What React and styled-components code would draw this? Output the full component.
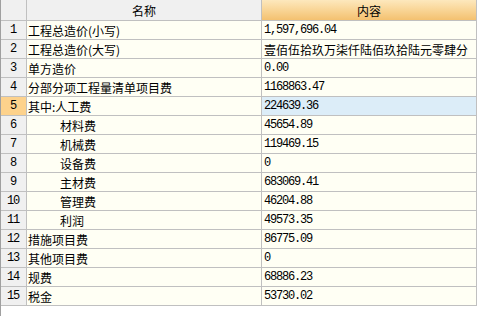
import React from "react";
import styled, { createGlobalStyle, css } from "styled-components";

const Global = createGlobalStyle`
  html, body { margin: 0; padding: 0; background: #ffffff; }
  body { font-family: "Noto Sans CJK SC", "Liberation Sans", sans-serif; }
`;

const Frame = styled.div`
  height: 316px;
  width: 494px;
  border-left: 1px solid #a0a0a0;
  background: #ffffff;
  overflow: hidden;
`;

const Grid = styled.div`
  display: grid;
  grid-template-columns: 26px 235px 215px;
  width: 476px;
`;

const cellBase = css`
  box-sizing: border-box;
  border-right: 1px solid #c0c0c0;
  border-bottom: 1px solid #c0c0c0;
  display: flex;
  align-items: center;
  font-size: 12px;
  color: #000;
  white-space: nowrap;
  overflow: hidden;
`;

const HeadCell = styled.div`
  ${cellBase};
  height: 21px;
  justify-content: center;
  background: ${(p) =>
    p.$accent
      ? "linear-gradient(to bottom, #fde8bd 0%, #f9d596 50%, #f4c170 100%)"
      : "#f0f0f0"};
`;

const NumCell = styled.div`
  ${cellBase};
  height: 19px;
  justify-content: center;
  background: ${(p) => (p.$active ? "#fdd28c" : "#f0f0f0")};
  font-family: "Liberation Mono", monospace;
  letter-spacing: -1.2px;
  padding-right: 1px;
`;

const NameCell = styled.div`
  ${cellBase};
  height: 19px;
  background: #fffff4;
  padding-left: ${(p) => (p.$indent ? 33 : 1)}px;
`;

const ValueCell = styled.div`
  ${cellBase};
  height: 19px;
  background: ${(p) => (p.$active ? "#dcedf8" : "#fffff4")};
  padding-left: 2px;
  font-family: ${(p) =>
    p.$cjk
      ? '"Noto Sans CJK SC", sans-serif'
      : '"Liberation Mono", monospace'};
  letter-spacing: ${(p) => (p.$cjk ? "0" : "-1.2px")};
`;

const rows = [
  ["工程总造价(小写)", "1,597,696.04"],
  ["工程总造价(大写)", "壹佰伍拾玖万柒仟陆佰玖拾陆元零肆分", false, true],
  ["单方造价", "0.00"],
  ["分部分项工程量清单项目费", "1168863.47"],
  ["其中:人工费", "224639.36"],
  ["材料费", "45654.89", true],
  ["机械费", "119469.15", true],
  ["设备费", "0", true],
  ["主材费", "683069.41", true],
  ["管理费", "46204.88", true],
  ["利润", "49573.35", true],
  ["措施项目费", "86775.09"],
  ["其他项目费", "0"],
  ["规费", "68886.23"],
  ["税金", "53730.02"],
];

export default function App() {
  return (
    <>
      <Global />
      <Frame>
        <Grid>
          <HeadCell />
          <HeadCell>名称</HeadCell>
          <HeadCell $accent>内容</HeadCell>
          {rows.map(([name, value, indent, cjk], i) => {
            const active = i === 4;
            return (
              <React.Fragment key={i}>
                <NumCell $active={active}>{i + 1}</NumCell>
                <NameCell $indent={indent}>{name}</NameCell>
                <ValueCell $active={active} $cjk={cjk}>
                  {value}
                </ValueCell>
              </React.Fragment>
            );
          })}
        </Grid>
      </Frame>
    </>
  );
}
